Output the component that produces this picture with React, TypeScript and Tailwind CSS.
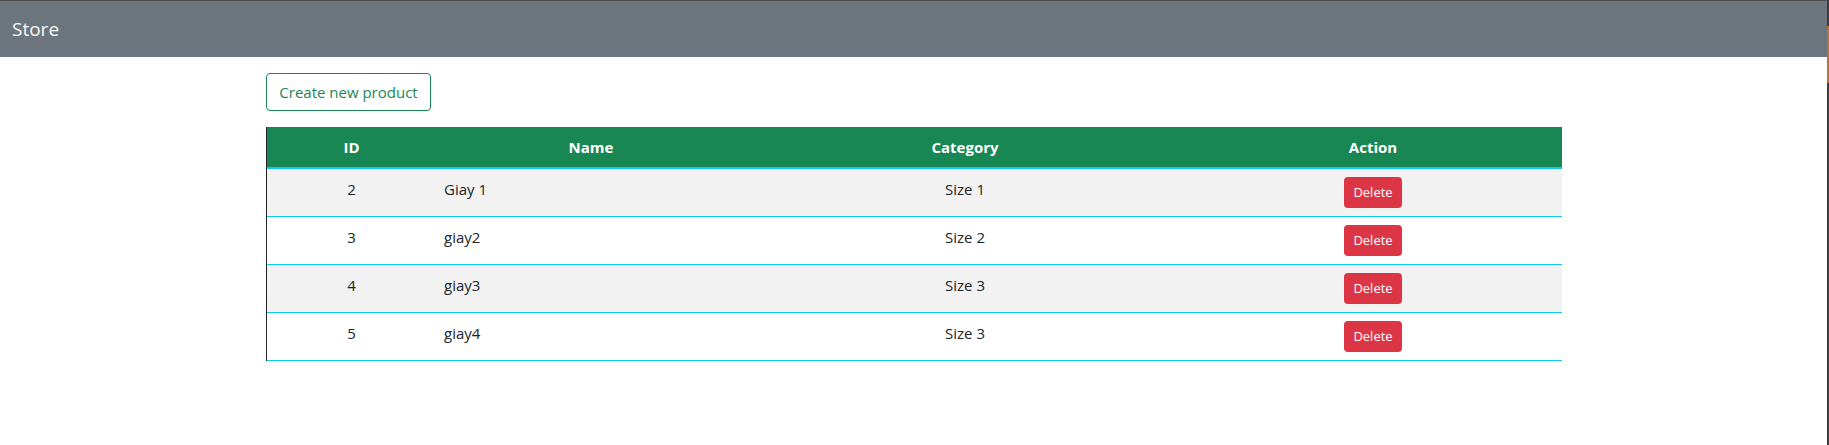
import React from "react";

type Product = {
  id: number;
  name: string;
  category: string;
};

const products: Product[] = [
  { id: 2, name: "Giay 1", category: "Size 1" },
  { id: 3, name: "giay2", category: "Size 2" },
  { id: 4, name: "giay3", category: "Size 3" },
  { id: 5, name: "giay4", category: "Size 3" },
];

const font = { fontFamily: '"Open Sans", "Noto Sans", sans-serif' };

export default function App() {
  return (
    <div className="relative min-h-[445px] bg-white text-[#212529]" style={font}>
      {/* navbar */}
      <nav className="flex h-[57px] items-center border-t border-[#4f4f4f] bg-[#6c757d] px-3">
        <span className="text-[19px] leading-[30px] text-[#f8f9fa]">Store</span>
      </nav>

      <div className="ml-[254px] w-[1320px] px-3">
        <div className="mt-4">
          <button className="h-[38px] w-[165px] rounded-[4px] border border-[#198754] text-[15px] text-[#198754]">
            Create new product
          </button>
        </div>

        <table className="mt-4 w-[1296px] table-fixed border-separate border-spacing-0 border-l border-[#212529] text-[15px] leading-6">
          <colgroup>
            <col className="w-[169px]" />
            <col className="w-[310px]" />
            <col className="w-[438px]" />
            <col className="w-[378px]" />
          </colgroup>
          <thead>
            <tr className="bg-[#198754] text-white">
              <th className="border-b-2 border-[#0dcaf0] p-2 text-center font-bold">ID</th>
              <th className="border-b-2 border-[#0dcaf0] p-2 text-center font-bold">Name</th>
              <th className="border-b-2 border-[#0dcaf0] p-2 text-center font-bold">Category</th>
              <th className="border-b-2 border-[#0dcaf0] p-2 text-center font-bold">Action</th>
            </tr>
          </thead>
          <tbody>
            {products.map((p, i) => (
              <tr key={p.id} className={i % 2 === 0 ? "bg-[#f2f2f2]" : "bg-white"}>
                <td className="border-b border-[#0dcaf0] p-2 text-center align-top">{p.id}</td>
                <td className="border-b border-[#0dcaf0] p-2 text-left align-top">{p.name}</td>
                <td className="border-b border-[#0dcaf0] p-2 text-center align-top">{p.category}</td>
                <td className="border-b border-[#0dcaf0] p-2 text-center align-top">
                  <button className="h-[31px] w-[58px] rounded-[4px] bg-[#dc3545] text-[13px] leading-[21px] text-white">
                    Delete
                  </button>
                </td>
              </tr>
            ))}
          </tbody>
        </table>
      </div>

      {/* window edge strip */}
      <div className="absolute right-0 top-0 flex h-full w-[2px] flex-col">
        <div className="h-[26px] bg-[#3c3c3c]" />
        <div className="h-[57px] bg-[#c0732e]" />
        <div className="flex-1 bg-[#3c3c3c]" />
      </div>
    </div>
  );
}
